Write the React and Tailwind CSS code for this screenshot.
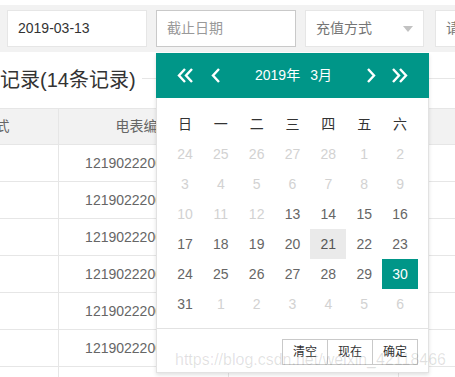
import React from 'react';

const font = { fontFamily: '"Liberation Sans", "Noto Sans CJK SC", Arial, sans-serif' };

function Chevron({ dir = 'left', double = false }) {
  const w = double ? 16 : 9;
  const flip = dir === 'right' ? `scale(-1,1) translate(-${w},0)` : undefined;
  return (
    <svg width={w} height="15" viewBox={`0 0 ${w} 15`} className="block">
      <g transform={flip} fill="none" stroke="#fff" strokeWidth="2.4" strokeLinejoin="miter">
        {double ? (
          <>
            <polyline points="8,1 2,7.5 8,14" />
            <polyline points="15,1 9,7.5 15,14" />
          </>
        ) : (
          <polyline points="8,1 2,7.5 8,14" />
        )}
      </g>
    </svg>
  );
}

const days = [
  ...[24, 25, 26, 27, 28].map(d => ({ d, dim: true })),
  ...Array.from({ length: 31 }, (_, i) => ({ d: i + 1, dim: i + 1 < 13 })),
  ...[1, 2, 3, 4, 5, 6].map(d => ({ d, dim: true })),
];

function Calendar() {
  return (
    <div className="absolute left-[156px] top-[53px] w-[273px] bg-white border border-[#e2e2e2] shadow-[0_2px_4px_rgba(0,0,0,0.12)]">
      <div className="h-[45px] -mx-px -mt-px bg-[#009688] flex items-center px-[21px] text-white">
        <Chevron double />
        <div className="ml-[18px]"><Chevron /></div>
        <div className="flex-1 flex justify-center text-[14px]">
          <span>2019年</span>
          <span className="ml-[10px]">3月</span>
        </div>
        <Chevron dir="right" />
        <div className="ml-[16px]"><Chevron dir="right" double /></div>
      </div>
      <div className="px-[10px] pt-[11px]">
        <div className="grid grid-cols-7 text-[14px] text-[#333]">
          {['日', '一', '二', '三', '四', '五', '六'].map(n => (
            <div key={n} className="h-[30px] flex items-center justify-center">{n}</div>
          ))}
          {days.map((x, i) => {
            let cls = x.dim ? 'text-[#d2d2d2]' : 'text-[#666]';
            if (!x.dim && x.d === 21) cls = 'bg-[#eaeaea] text-[#555]';
            if (!x.dim && x.d === 30) cls = 'bg-[#009688] text-white';
            return (
              <div key={i} className={`h-[30px] flex items-center justify-center ${cls}`}>{x.d}</div>
            );
          })}
        </div>
      </div>
      <div className="mt-[9px] border-t border-[#e2e2e2] h-[44px] flex items-start justify-end pt-[10px] pr-[10px]">
        {['清空', '现在', '确定'].map((b, i) => (
          <div key={b} className={`w-[46px] h-[26px] border border-[#c9c9c9] text-[12px] text-[#333] flex items-center justify-center bg-white ${i > 0 ? '-ml-px' : ''}`}>{b}</div>
        ))}
      </div>
    </div>
  );
}

export default function App() {
  const rows = Array.from({ length: 7 });
  return (
    <div className="relative w-[455px] h-[377px] overflow-hidden bg-white" style={font}>
      <div className="mt-[5px] h-[47px] bg-[#f2f2f2] flex items-center pl-[7px] text-[14px]">
        <div className="w-[140px] h-[37px] shrink-0 bg-white border border-[#e6e6e6] flex items-center pl-[10px] text-[#333]">2019-03-13</div>
        <div className="ml-[9px] w-[140px] h-[37px] shrink-0 bg-white border border-[#c9c9c9] flex items-center pl-[10px] text-[#999]">截止日期</div>
        <div className="ml-[9px] w-[119px] h-[37px] shrink-0 bg-white border border-[#e6e6e6] flex items-center justify-between pl-[10px] pr-[10px] text-[#757575]">
          <span>充值方式</span>
          <span className="w-0 h-0 border-l-[5px] border-r-[5px] border-t-[6px] border-l-transparent border-r-transparent border-t-[#c2c2c2]" />
        </div>
        <div className="ml-[11px] w-[140px] h-[37px] shrink-0 bg-white border border-[#e6e6e6] flex items-center pl-[10px] text-[#757575]">请输入电表编号</div>
      </div>

      <div className="h-[56px] flex items-center">
        <span className="text-[20px] text-[#333] whitespace-nowrap">记录(14条记录)</span>
        <div className="flex-1 ml-[6px] h-px bg-[#e6e6e6] -mt-[3px]" />
      </div>

      <div className="-ml-[95px] w-[700px] text-[14px] text-[#666]">
        <div className="flex h-[37px] bg-[#f2f2f2] border-y border-[#e6e6e6]">
          <div className="w-[154px] flex items-center justify-center border-r border-[#e6e6e6]">充值方式</div>
          <div className="w-[170px] flex items-center justify-center border-r border-[#e6e6e6]">电表编号</div>
          <div className="w-[170px] flex items-center justify-center border-r border-[#e6e6e6]">用户名称</div>
          <div className="w-[170px] flex items-center justify-center">充值金额</div>
        </div>
        {rows.map((_, i) => (
          <div key={i} className="flex h-[37px] border-b border-[#e6e6e6]">
            <div className="w-[154px] flex items-center justify-center border-r border-[#e6e6e6]">微信</div>
            <div className="w-[170px] flex items-center justify-center border-r border-[#e6e6e6]">121902220000001</div>
            <div className="w-[170px] flex items-center justify-center border-r border-[#e6e6e6]">张三</div>
            <div className="w-[170px] flex items-center justify-center">100.00</div>
          </div>
        ))}
      </div>

      <Calendar />

      <div className="absolute left-[175px] top-[348px] text-[16px] text-[rgba(0,0,0,0.12)] whitespace-nowrap pointer-events-none">
        https://blog.csdn.net/weixin_42118466
      </div>
    </div>
  );
}
